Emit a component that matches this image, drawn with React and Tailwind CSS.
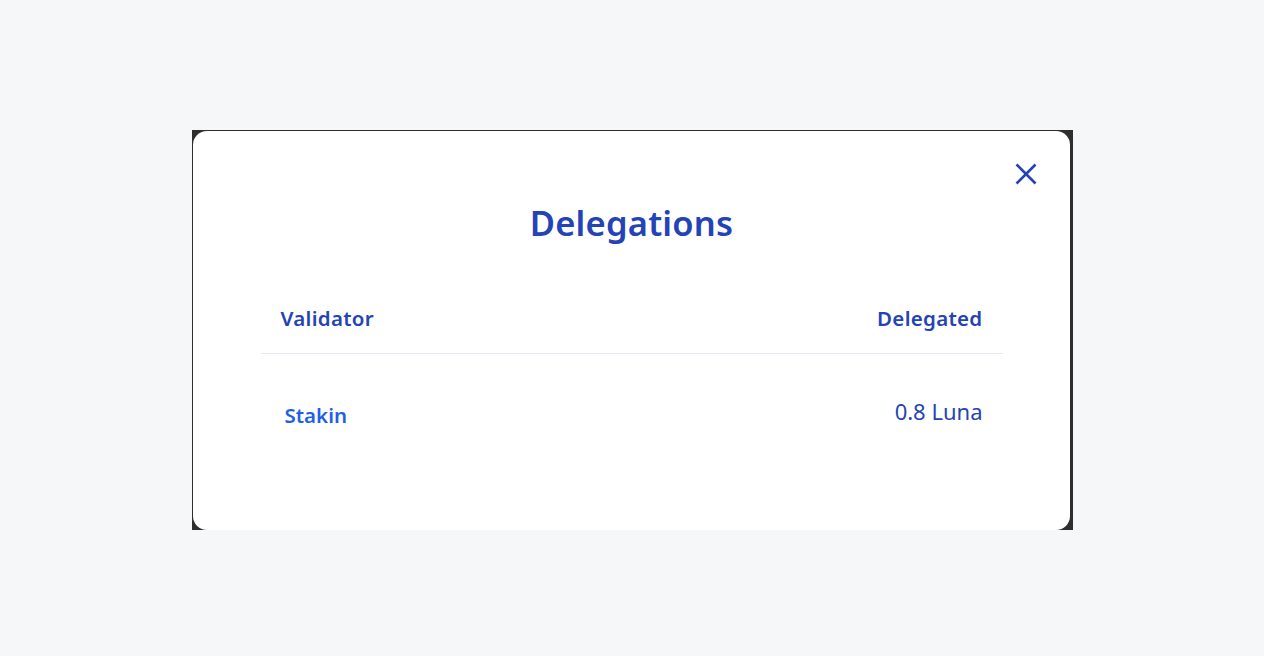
import React from 'react';

const App = () => {
  return (
    <div className="w-full h-[656px] bg-[#f6f7f9] flex items-start justify-center pt-[130px]" style={{ fontFamily: '"Noto Sans", "Open Sans", sans-serif' }}>
      <div className="w-[881px] h-[400px] bg-[#2e2e2e] pt-px pl-px pr-[3px]">
        <div className="relative h-full bg-white rounded-[14px] pl-[68px] pr-[67px]">
          {/* Close */}
          <button className="absolute right-[32px] top-[31px] text-[#2443b6]">
            <svg width="24" height="24" viewBox="0 0 24 24" fill="none" stroke="currentColor" strokeWidth="2.6" strokeLinecap="butt">
              <path d="M2.5 2.5L21.5 21.5" />
              <path d="M21.5 2.5L2.5 21.5" />
            </svg>
          </button>

          <h2 className="pt-[70px] text-center text-[34.5px] leading-[44px] font-semibold text-[#2443b6] tracking-[0.2px]">
            Delegations
          </h2>

          <div className="mt-[39px]">
            <div className="flex justify-between items-center px-5 h-[70px] border-b border-[#e6e9f1] text-[20.5px] font-semibold text-[#2443b6] tracking-[0.3px]">
              <span>Validator</span>
              <span>Delegated</span>
            </div>
            <div className="flex justify-between items-center pl-6 pr-5 h-[114px]">
              <span className="text-[20.5px] font-semibold text-[#1e5fe8] mt-[8px]">Stakin</span>
              <span className="text-[22px] text-[#2443b6]">0.8 Luna</span>
            </div>
          </div>
        </div>
      </div>
    </div>
  );
};

export default App;
